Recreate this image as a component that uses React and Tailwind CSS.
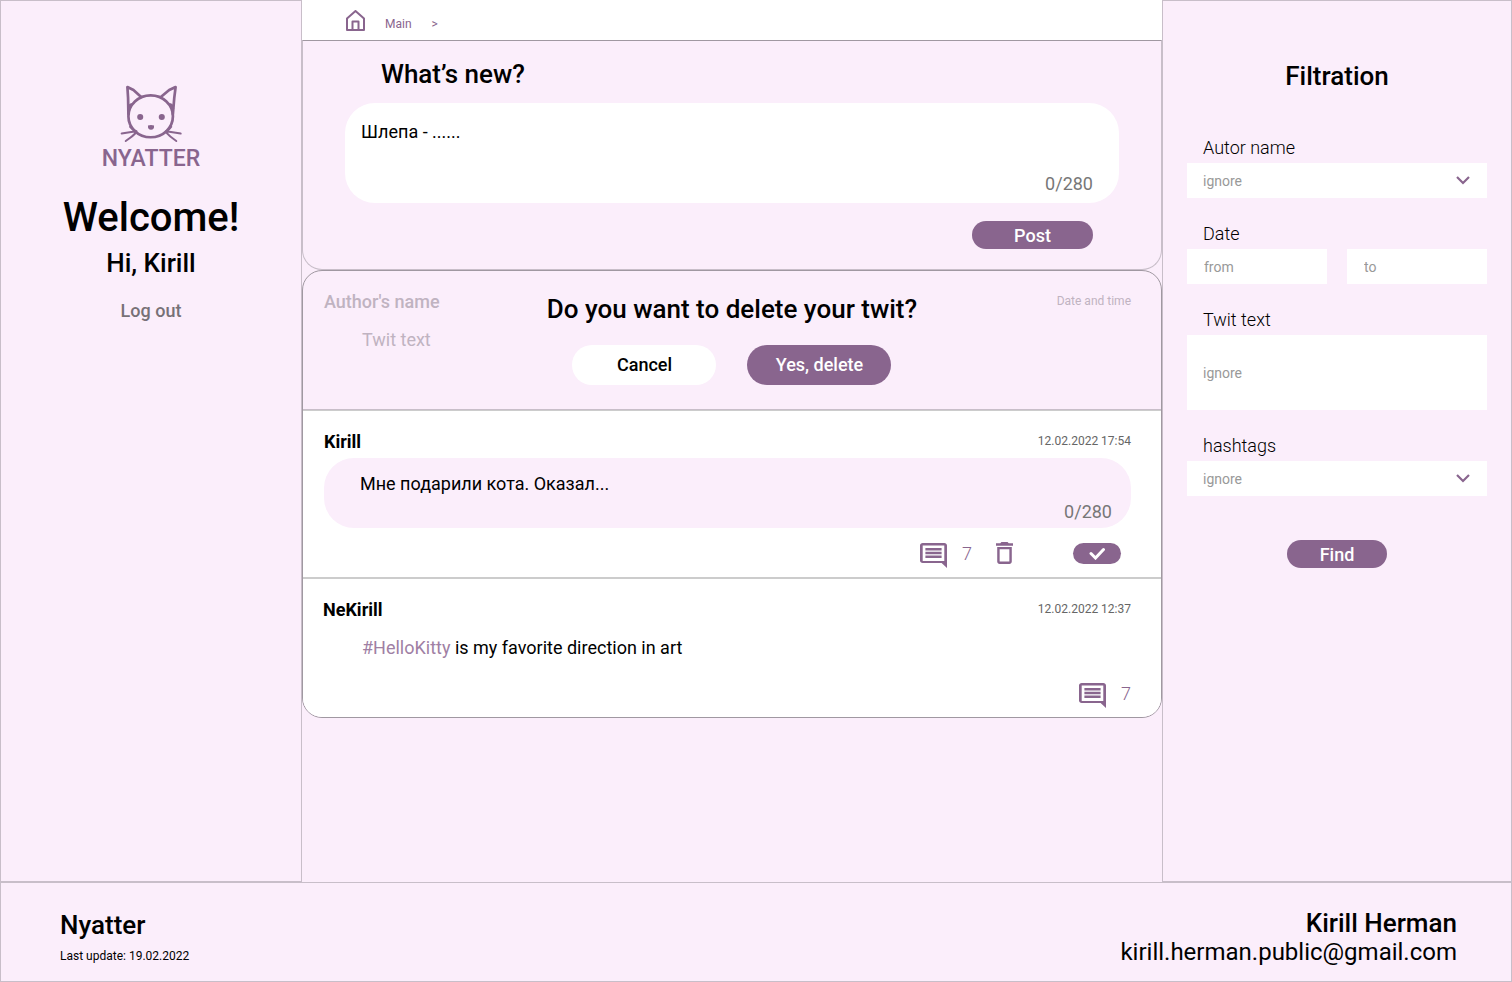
import React from "react";

const posts = {
  own: { author: "Kirill", date: "12.02.2022 17:54", text: "Мне подарили кота. Оказал...", comments: 7 },
  other: { author: "NeKirill", date: "12.02.2022 12:37", tag: "#HelloKitty", text: " is my favorite direction in art", comments: 7 },
};

function CatLogo() {
  return (
    <svg viewBox="89 32 182 172" className="h-[58px] w-[62px]" fill="none" stroke="#89658e" strokeWidth="8" strokeLinecap="round" strokeLinejoin="round" aria-hidden="true">
      <ellipse cx="179" cy="125" rx="66" ry="62" />
      <path d="M113 118L112 70L110 38L128 47L150 67" />
      <path d="M245 118L249 70L253 38L234 47L210 67" />
      <path d="M114 102L118 92L122 90M245 102L241 92L237 90" />
      <path d="M118 156Q126 166 137 169Q118 171 93 176M137 172Q125 185 105 198" strokeWidth="6" />
      <path d="M240 156Q234 166 224 169Q242 171 268 176M224 172Q235 185 255 198" strokeWidth="6" />
      <g fill="#89658e" stroke="none">
        <circle cx="148" cy="127" r="9" />
        <circle cx="212" cy="127" r="9" />
        <path d="M171 152Q180 149 189 152Q190 165 180 165Q170 165 171 152Z" />
      </g>
    </svg>
  );
}

function HomeIcon() {
  return (
    <svg viewBox="0 0 19 21" className="h-[21px] w-[19px]" fill="none" stroke="#89658e" strokeWidth="2" strokeLinejoin="round" aria-hidden="true">
      <path d="M1 8.500L9.500 1L18 8.500V20H1Z" />
      <path d="M6.500 20V11.500H12.500V20" strokeWidth="2" />
    </svg>
  );
}

function CommentButton({ count }) {
  return (
    <button type="button" aria-label="Comments" className="flex items-start gap-[15px] text-lg leading-6 font-light text-[#89658e]">
      <svg viewBox="2 2 20 20" preserveAspectRatio="none" className="mt-px h-[25px] w-[27px]" fill="currentColor" aria-hidden="true">
        <path d="M21.99 4c0-1.100-.89-2-1.990-2H4c-1.100 0-2 .9-2 2v12c0 1.100.9 2 2 2h14l4 4-.01-18zM20 4v12.300H4V4h16zM6 12h12v2H6zm0-3h12v2H6zm0-3h12v2H6z" />
      </svg>
      <span>{count}</span>
    </button>
  );
}

function TrashIcon() {
  return (
    <svg viewBox="5 3 14 18" preserveAspectRatio="none" className="h-[22px] w-[17px]" fill="#89658e" aria-hidden="true">
      <path d="M6 19c0 1.100.9 2 2 2h8c1.100 0 2-.9 2-2V7H6v12zM8 9h8v10H8V9zm7.500-5l-1-1h-5l-1 1H5v2h14V4h-3.500z" />
    </svg>
  );
}

function FilterSelect({ id, label }) {
  return (
    <div className="flex flex-col gap-[3px]">
      <label htmlFor={id} className="pl-4 text-lg leading-6 font-light">{label}</label>
      <div className="relative">
        <select id={id} className="block h-[35px] w-full appearance-none bg-white px-4 text-sm text-[#999999] outline-none">
          <option>ignore</option>
        </select>
        <svg viewBox="0 0 14 9" className="pointer-events-none absolute top-[13px] right-[17px] h-[9px] w-[14px]" fill="none" stroke="#89658e" strokeWidth="2.200" aria-hidden="true">
          <path d="M1 1L7 7L13 1" />
        </svg>
      </div>
    </div>
  );
}

function PostHeader({ author, date }) {
  return (
    <header className="flex items-start justify-between">
      <h3 className="text-lg leading-6 font-bold">{author}</h3>
      <time className="text-xs leading-[22px] text-[#666666]">{date}</time>
    </header>
  );
}

function Profile() {
  return (
    <aside className="flex w-[302px] shrink-0 flex-col items-center border border-[#c8bec9] pt-[84px]">
      <CatLogo />
      <p className="text-[23px] leading-8 font-medium text-[#89658e]">NYATTER</p>
      <h1 className="mt-[19px] text-[40px] leading-12 font-medium">Welcome!</h1>
      <p className="mt-[5px] text-[26px] leading-8 font-medium">Hi, Kirill</p>
      <button type="button" className="mt-5 text-lg leading-6 font-medium text-[#777177]">Log out</button>
    </aside>
  );
}

function NewPost() {
  return (
    <form className="rounded-b-[20px] border border-[#c8bec9] border-t-[#a098a1] px-[42px] pt-[17px] pb-[20px]">
      <h2 className="pl-9 text-[26px] leading-8 font-medium">
        <label htmlFor="new-post">What’s new?</label>
      </h2>
      <div className="mt-[13px] rounded-[30px] bg-white pt-[17px] pr-[26px] pb-[7px] pl-4">
        <textarea id="new-post" defaultValue="Шлепа - ......" className="block h-[52px] w-full resize-none bg-transparent text-lg leading-6 outline-none" />
        <p className="text-right text-lg leading-6 text-[#777777]">0/280</p>
      </div>
      <div className="mt-[18px] flex justify-end pr-[26px]">
        <button type="button" className="h-7 w-[121px] rounded-full bg-[#89658e] pt-[2px] text-lg leading-6 font-medium text-white">Post</button>
      </div>
    </form>
  );
}

function DeletePrompt() {
  return (
    <article className="grid grid-cols-[1fr_auto_1fr] border-b border-[#c8bec9] px-[21px] pt-[18px] pb-6 text-[#c0b3c1]">
      <div className="pt-px">
        <h3 className="text-lg leading-6 font-medium">Author's name</h3>
        <p className="mt-[14px] pl-[38px] text-lg leading-6">Twit text</p>
      </div>
      <div className="flex flex-col items-center pt-1 text-black">
        <h2 className="text-[26px] leading-8 font-medium">Do you want to delete your twit?</h2>
        <div className="mt-5 flex gap-[31px]">
          <button type="button" className="h-10 w-36 rounded-full bg-white text-lg font-medium">Cancel</button>
          <button type="button" className="h-10 w-36 rounded-full bg-[#89658e] text-lg font-medium text-white">Yes, delete</button>
        </div>
      </div>
      <p className="pr-[9px] text-right text-xs leading-6">Date and time</p>
    </article>
  );
}

function OwnPost({ post }) {
  return (
    <article className="border-y border-[#cccccc] bg-white pt-[19px] pr-[30px] pb-[9px] pl-[21px]">
      <PostHeader author={post.author} date={post.date} />
      <div className="mt-1 rounded-[30px] bg-[#fbeefb] pt-[14px] pr-[19px] pb-1 pl-9">
        <input aria-label="Edit twit" defaultValue={post.text} className="block h-6 w-full bg-transparent text-lg leading-6 outline-none" />
        <p className="mt-1 text-right text-lg leading-6 text-[#777777]">0/280</p>
      </div>
      <div className="mt-[14px] flex items-start justify-end pr-[10px]">
        <CommentButton count={post.comments} />
        <button type="button" aria-label="Delete" className="ml-6"><TrashIcon /></button>
        <button type="button" aria-label="Save" className="mt-px ml-[60px] flex h-[21px] w-12 items-center justify-center rounded-full bg-[#89658e]">
          <svg viewBox="0 0 17 13" className="h-[13px] w-[17px]" fill="none" stroke="#ffffff" strokeWidth="3" strokeLinecap="round" aria-hidden="true">
            <path d="M2 6.500L6.500 11L14.500 2.500" />
          </svg>
        </button>
      </div>
    </article>
  );
}

function OtherPost({ post }) {
  return (
    <article className="border-t border-[#cccccc] bg-white pt-[19px] pr-[30px] pb-[9px] pl-5">
      <PostHeader author={post.author} date={post.date} />
      <p className="mt-[14px] pl-[39px] text-lg leading-6">
        <a href="#hellokitty" className="text-[#a07fa4]">{post.tag}</a>
        {post.text}
      </p>
      <div className="mt-[22px] flex justify-end">
        <CommentButton count={post.comments} />
      </div>
    </article>
  );
}

function Filters() {
  const field = "block h-[35px] w-full bg-white px-[17px] text-sm outline-none placeholder:text-[#999999]";
  return (
    <aside className="w-[350px] shrink-0 border border-[#c8bec9] px-6 pt-[59px]">
      <h2 className="text-center text-[26px] leading-8 font-medium">Filtration</h2>
      <form className="mt-11 flex flex-col gap-6">
        <FilterSelect id="author" label="Autor name" />
        <fieldset className="min-w-0">
          <legend className="mb-[3px] pl-4 text-lg leading-6 font-light">Date</legend>
          <div className="grid grid-cols-2 gap-5">
            <input aria-label="Date from" placeholder="from" className={field} />
            <input aria-label="Date to" placeholder="to" className={field} />
          </div>
        </fieldset>
        <div className="flex flex-col gap-[3px]">
          <label htmlFor="twit-text" className="pl-4 text-lg leading-6 font-light">Twit text</label>
          <textarea id="twit-text" placeholder="ignore" className="block h-[75px] resize-none bg-white px-4 pt-7 text-sm leading-5 outline-none placeholder:text-[#999999]" />
        </div>
        <FilterSelect id="hashtags" label="hashtags" />
        <button type="button" className="mt-5 h-7 w-[100px] self-center rounded-full bg-[#89658e] pt-[2px] text-lg leading-6 font-medium text-white">Find</button>
      </form>
    </aside>
  );
}

export default function App() {
  return (
    <div className="flex min-h-screen flex-col bg-[#fbeefb] font-['Roboto',sans-serif] text-black">
      <div className="flex flex-1">
        <Profile />
        <main className="min-w-0 flex-1">
          <nav aria-label="Breadcrumb" className="flex h-10 items-center bg-white pl-11 text-xs text-[#89658e]">
            <a href="#home" aria-label="Home"><HomeIcon /></a>
            <a href="#main" className="ml-5 pt-[7px]">Main</a>
            <span className="ml-5 pt-[7px]">&gt;</span>
          </nav>
          <NewPost />
          <section aria-label="Twits" className="overflow-hidden rounded-[20px] border border-[#a098a1]">
            <DeletePrompt />
            <OwnPost post={posts.own} />
            <OtherPost post={posts.other} />
          </section>
        </main>
        <Filters />
      </div>
      <footer className="flex justify-between border border-[#c8bec9] pt-6 pr-[54px] pb-[15px] pl-[59px]">
        <div className="pt-[2px]">
          <h2 className="text-[26px] leading-8 font-medium">Nyatter</h2>
          <p className="mt-[5px] text-xs leading-5">Last update: 19.02.2022</p>
        </div>
        <address className="text-right not-italic">
          <p className="text-[26px] leading-8 font-medium">Kirill Herman</p>
          <a href="mailto:kirill.herman.public@gmail.com" className="block text-2xl leading-[26px]">kirill.herman.public@gmail.com</a>
        </address>
      </footer>
    </div>
  );
}
